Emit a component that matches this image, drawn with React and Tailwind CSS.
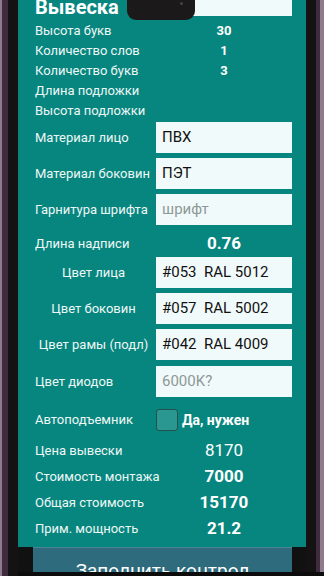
const teal = "bg-[#07867f]";

function Label({ children, center = false }) {
  return (
    <div className={`w-[117px] shrink-0 whitespace-nowrap ${center ? "text-center" : ""} text-[13px] text-[#eef7f6]`}>
      {children}
    </div>
  );
}

function TextRow({ label, value, bold = true, big = false, h = "h-[20px]" }) {
  return (
    <div className={`flex items-center ${h}`}>
      <Label>{label}</Label>
      <div className="w-[4px] shrink-0" />
      <div
        className={`w-[136px] shrink-0 text-center text-white ${bold ? "font-bold" : "font-normal"} ${
          big ? "text-[17px]" : "text-[13px]"
        }`}
      >
        {value}
      </div>
    </div>
  );
}

function InputRow({ label, value, placeholder, center = false }) {
  return (
    <div className="flex items-center h-[31px]">
      <Label center={center}>{label}</Label>
      <div className="w-[4px] shrink-0" />
      <div className="w-[136px] h-full shrink-0 bg-[#f1fafa] flex items-center px-[6px]">
        {value ? (
          <span className="text-[15px] text-[#111] whitespace-pre">{value}</span>
        ) : (
          <span className="text-[15px] text-[#8d9898]">{placeholder}</span>
        )}
      </div>
    </div>
  );
}

export default function App() {
  return (
    <div className="w-[324px] h-[576px] overflow-hidden bg-[#111] flex relative" style={{ fontFamily: "Roboto, 'Noto Sans', sans-serif" }}>
      {/* left frame */}
      <div className="w-[2px] bg-[#8d7a8b] shrink-0" />
      <div className="w-[6px] bg-[#3e2b3e] shrink-0" />
      <div className="w-[10px] bg-[#151214] shrink-0" />

      {/* screen */}
      <div className="w-[288px] shrink-0 flex flex-col">
        <div className={`${teal} pl-[17px] pb-[5px] flex flex-col`}>
          <div className="flex items-center h-[30px] -mt-[14px]">
            <div className="w-[117px] shrink-0 text-[20px] font-bold text-white pt-[12px]">Вывеска</div>
            <div className="w-[4px] shrink-0" />
            <div className="w-[136px] h-full shrink-0 bg-[#f1fafa]" />
          </div>

          <div className="mt-[5px] flex flex-col">
            <TextRow label="Высота букв" value="30" />
            <TextRow label="Количество слов" value="1" />
            <TextRow label="Количество букв" value="3" />
            <TextRow label="Длина подложки" value="" />
            <TextRow label="Высота подложки" value="" />
          </div>

          <div className="mt-[1px] flex flex-col gap-[5px]">
            <InputRow label="Материал лицо" value="ПВХ" />
            <InputRow label="Материал боковин" value="ПЭТ" />
            <InputRow label="Гарнитура шрифта" placeholder="шрифт" />
          </div>

          <div className="mt-[5px]">
            <TextRow label="Длина надписи" value="0.76" big h="h-[27px]" />
          </div>

          <div className="flex flex-col gap-[5px]">
            <InputRow label="Цвет лица" value="#053  RAL 5012" center />
            <InputRow label="Цвет боковин" value="#057  RAL 5002" center />
            <InputRow label="Цвет рамы (подл)" value="#042  RAL 4009" center />
            <div className="mt-[1px]">
              <InputRow label="Цвет диодов" placeholder="6000K?" />
            </div>
          </div>

          <div className="mt-[10px] flex items-center h-[26px]">
            <Label>Автоподъемник</Label>
            <div className="w-[4px] shrink-0" />
            <div className="flex items-center gap-[4px]">
              <div className="w-[22px] h-[22px] rounded-[3px] border-[1.5px] border-[#24504d] bg-[#2a9790]" />
              <span className="text-[14px] font-bold text-white">Да, нужен</span>
            </div>
          </div>

          <div className="mt-[5px] flex flex-col">
            <TextRow label="Цена вывески" value="8170" bold={false} big h="h-[26px]" />
            <TextRow label="Стоимость монтажа" value="7000" big h="h-[26px]" />
            <TextRow label="Общая стоимость" value="15170" big h="h-[26px]" />
            <TextRow label="Прим. мощность" value="21.2" big h="h-[26px]" />
          </div>
        </div>

        <div className="h-[10px] bg-[#141414]" />
        <div className="pr-[14px] pl-[15px]">
          <div className="h-[30px] bg-[#2e6b7c] border-t border-[#4a8595] text-center text-[19px] text-white pt-[13px] leading-none">
            Заполнить контрол
          </div>
        </div>
      </div>

      {/* right frame */}
      <div className="w-[10px] bg-[#151214] shrink-0" />
      <div className="w-[4px] bg-[#3e2b3e] shrink-0" />
      <div className="w-[4px] bg-[#8d7a8b] shrink-0" />

      {/* notch */}
      <div className="absolute left-[127px] top-0 w-[68px] h-[20px] bg-[#1b1919] rounded-b-[9px]">
        <div className="absolute right-[12px] top-[2px] w-[3px] h-[3px] rounded-full bg-[#444]" />
      </div>
      {/* bottom strip */}
      <div className="absolute left-[18px] right-0 bottom-0 h-[4px] bg-[#0c0c0c]" />
    </div>
  );
}
